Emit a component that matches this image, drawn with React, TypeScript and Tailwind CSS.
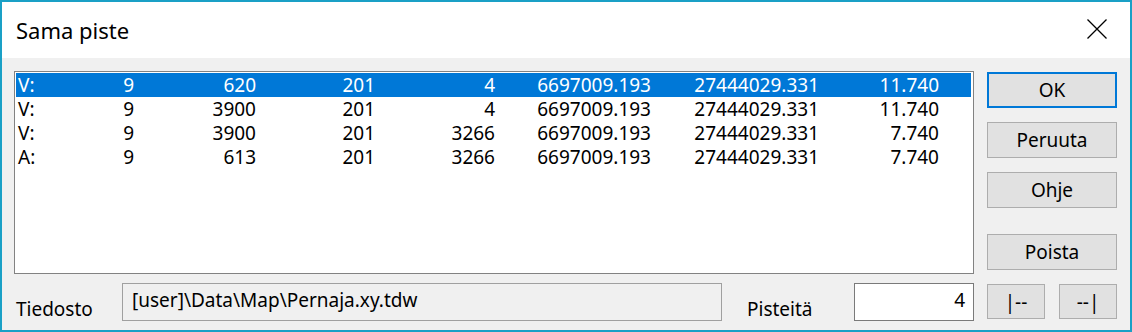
import React from "react";

const rows = [
  ["V:", "9", "620", "201", "4", "6697009.193", "27444029.331", "11.740"],
  ["V:", "9", "3900", "201", "4", "6697009.193", "27444029.331", "11.740"],
  ["V:", "9", "3900", "201", "3266", "6697009.193", "27444029.331", "7.740"],
  ["A:", "9", "613", "201", "3266", "6697009.193", "27444029.331", "7.740"],
];

function Btn({ label, primary = false, className = "" }: { label: string; primary?: boolean; className?: string }) {
  return (
    <div
      className={
        "flex items-center justify-center bg-[#e1e1e1] text-black leading-[24px] " +
        (primary ? "border-2 border-[#0078d7] " : "border border-[#adadad] ") +
        className
      }
    >
      {label}
    </div>
  );
}

export default function App() {
  return (
    <div
      className="w-[1132px] h-[332px] border-2 border-[#1aa0c6] bg-[#f0f0f0] flex flex-col text-[19px] text-black overflow-hidden"
      style={{ fontFamily: '"Noto Sans", "Open Sans", sans-serif' }}
    >
      {/* Title bar */}
      <div className="h-[56px] bg-white flex items-center justify-between pl-[14px] pr-[23px]">
        <div className="text-[22px] leading-[28px]">Sama piste</div>
        <svg width="20" height="20" viewBox="0 0 20 20" className="mt-[-2px]">
          <path d="M0.5 0.5 L19.5 19.5 M19.5 0.5 L0.5 19.5" stroke="#000" strokeWidth="1.3" fill="none" />
        </svg>
      </div>

      {/* Body */}
      <div className="flex-1 flex flex-col pl-[12px] pr-[13px] pt-[13px] pb-[9px] gap-[9px]">
        <div className="flex gap-[13px]">
          {/* List box */}
          <div className="w-[960px] h-[203px] border border-[#828282] bg-white pt-px pl-px pr-[2px]">
            {rows.map((r, i) => (
              <div
                key={i}
                className={
                  "grid grid-cols-[60px_58px_122px_119px_120px_156px_168px_120px] h-[24px] leading-[24px] " +
                  (i === 0 ? "bg-[#0078d7] text-white" : "text-black")
                }
              >
                {r.map((c, j) => (
                  <div key={j} className={j === 0 ? "pl-[2px] text-left" : "text-right"}>
                    {c}
                  </div>
                ))}
              </div>
            ))}
          </div>

          {/* Buttons */}
          <div className="w-[130px] flex flex-col pt-px">
            <Btn label="OK" primary className="h-[36px]" />
            <Btn label="Peruuta" className="h-[36px] mt-[14px]" />
            <Btn label="Ohje" className="h-[36px] mt-[14px]" />
            <Btn label="Poista" className="h-[36px] mt-[26px]" />
          </div>
        </div>

        {/* Bottom row */}
        <div className="flex h-[38px]">
          <div className="w-[108px] flex items-end pl-[2px] leading-[24px]">Tiedosto</div>
          <div className="w-[600px] h-[38px] border border-[#a0a0a0] bg-[#f0f0f0] pl-[9px] pt-[4px] leading-[24px]">
            [user]\Data\Map\Pernaja.xy.tdw
          </div>
          <div className="w-[132px] flex items-end pl-[25px] leading-[24px]">Pisteitä</div>
          <div className="w-[120px] h-[38px] border border-[#7a7a7a] bg-white pr-[8px] pt-[4px] text-right leading-[24px]">
            4
          </div>
          <div className="flex ml-[13px] gap-[14px] pt-px">
            <Btn label="|--" className="w-[58px] h-[35px]" />
            <Btn label="--|" className="w-[58px] h-[35px]" />
          </div>
        </div>
      </div>
    </div>
  );
}
